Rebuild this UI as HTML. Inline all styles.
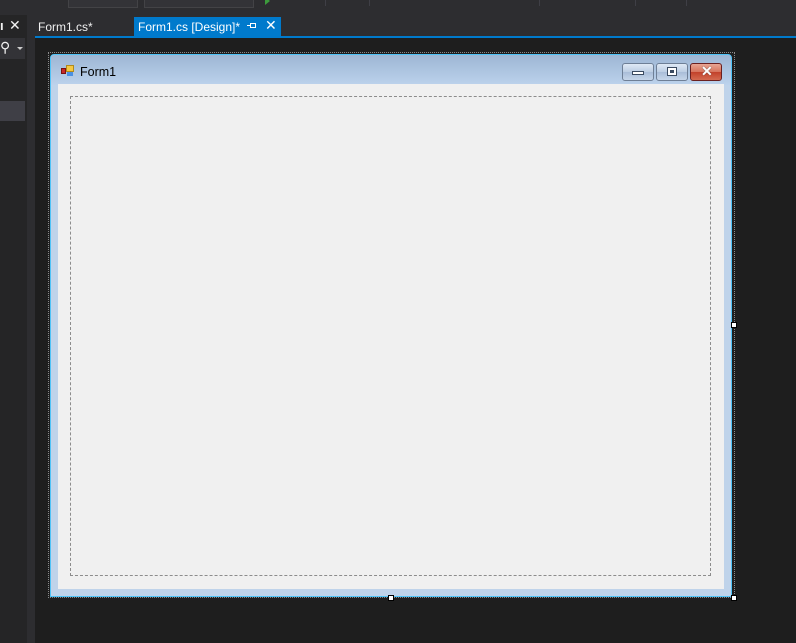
<!DOCTYPE html>
<html><head><style>
*{margin:0;padding:0;box-sizing:border-box}
body{width:796px;height:643px;background:#1e1e1e;position:relative;overflow:hidden;font-family:"Liberation Sans",sans-serif}
.a{position:absolute}
.btn{position:absolute;top:63px;width:32px;height:18px;border:1px solid #6e7f96;border-radius:3px;background:linear-gradient(#dfe9f5,#bccde3 50%,#a9bdd8 51%,#c6d6ea)}
</style></head><body>
<!-- toolbar -->
<div class="a" style="left:0;top:0;width:796px;height:15px;background:#2d2d30"></div>
<div class="a" style="left:68px;top:-4px;width:70px;height:12px;background:#333337;border:1px solid #434346"></div>
<div class="a" style="left:144px;top:-4px;width:110px;height:12px;background:#333337;border:1px solid #434346"></div>
<div class="a" style="left:265px;top:-3px;width:0;height:0;border-left:5px solid #3c9b3c;border-top:4px solid transparent;border-bottom:4px solid transparent"></div>
<div class="a" style="left:325px;top:0;width:1px;height:6px;background:#3f3f46"></div>
<div class="a" style="left:369px;top:0;width:1px;height:6px;background:#3f3f46"></div>
<div class="a" style="left:539px;top:0;width:1px;height:6px;background:#3f3f46"></div>
<div class="a" style="left:635px;top:0;width:1px;height:6px;background:#3f3f46"></div>
<div class="a" style="left:686px;top:0;width:1px;height:6px;background:#3f3f46"></div>
<!-- tab row -->
<div class="a" style="left:0;top:15px;width:796px;height:22px;background:#2d2d30"></div>
<div class="a" style="left:34px;top:36px;width:762px;height:2px;background:#007acc"></div>
<div class="a" style="left:38px;top:20px;color:#f1f1f1;font-size:12px">Form1.cs*</div>
<div class="a" style="left:134px;top:17px;width:147px;height:20px;background:#007acc"></div>
<div class="a" style="left:138px;top:20px;color:#fff;font-size:12px">Form1.cs [Design]*</div>
<div class="a" style="left:250px;top:23px;width:6px;height:5px;border:1px solid #fff"></div>
<div class="a" style="left:247px;top:25px;width:3px;height:1px;background:#fff"></div>
<div class="a" style="left:265px;top:17px;color:#fff;font-size:14px">✕</div>
<!-- left panel -->
<div class="a" style="left:0;top:15px;width:27px;height:628px;background:#252526"></div>
<div class="a" style="left:27px;top:15px;width:8px;height:628px;background:#2d2d30"></div>
<div class="a" style="left:0;top:18px;color:#f1f1f1;font-size:13px;font-weight:bold">ı</div>
<div class="a" style="left:9px;top:17px;color:#f1f1f1;font-size:14px">✕</div>
<div class="a" style="left:0;top:38px;width:25px;height:21px;background:#333337"></div>
<div class="a" style="left:0;top:39px;color:#f1f1f1;font-size:14px">⚲</div>
<div class="a" style="left:17px;top:47px;border-left:3px solid transparent;border-right:3px solid transparent;border-top:3px solid #ccc"></div>
<div class="a" style="left:0;top:101px;width:25px;height:20px;background:#3f3f46"></div>
<!-- selection -->
<div class="a" style="left:48px;top:52px;width:687px;height:546px;border:1px dotted #8a8a8a"></div>
<!-- form -->
<div class="a" style="left:50px;top:54px;width:682px;height:543px;background:#bfd3ea;border:1px solid #4fc3f7;border-radius:4px 4px 0 0"></div>
<div class="a" style="left:51px;top:55px;width:680px;height:30px;background:linear-gradient(#9db6d4,#bcd2ec);border-radius:3px 3px 0 0"></div>
<div class="a" style="left:58px;top:84px;width:666px;height:505px;background:#f0f0f0"></div>
<div class="a" style="left:70px;top:96px;width:641px;height:480px;border:1px dashed #8c8c8c"></div>
<!-- icon -->
<div class="a" style="left:61px;top:68px;width:5px;height:6px;background:#c62828;border:1px solid #7a1010"></div>
<div class="a" style="left:66px;top:65px;width:8px;height:7px;background:#f5c842;border:1px solid #b08a1c"></div>
<div class="a" style="left:67px;top:72px;width:6px;height:4px;background:#4a90e2"></div>
<div class="a" style="left:80px;top:65px;color:#000;font-size:12.5px">Form1</div>
<!-- buttons -->
<div class="btn" style="left:622px"><div class="a" style="left:9px;top:7px;width:12px;height:4px;background:#fff;border:1px solid #3a4a60"></div></div>
<div class="btn" style="left:656px"><div class="a" style="left:10px;top:3px;width:10px;height:9px;background:#fff;border:1px solid #3a4a60"><div class="a" style="left:2px;top:2px;width:4px;height:3px;background:#3a4a60"></div></div></div>
<div class="btn" style="left:690px;border-color:#6a2020;background:linear-gradient(#e8a593,#d6735c 50%,#c2412a 51%,#d46a50)"><div class="a" style="left:10px;top:-1px;color:#fff;font-size:14px;font-weight:bold;text-shadow:0 0 1px #333">✕</div></div>
<!-- handles -->
<div class="a" style="left:731px;top:322px;width:6px;height:6px;background:#fff;border:1px solid #000"></div>
<div class="a" style="left:388px;top:595px;width:6px;height:6px;background:#fff;border:1px solid #000"></div>
<div class="a" style="left:731px;top:595px;width:6px;height:6px;background:#fff;border:1px solid #000"></div>
</body></html>
